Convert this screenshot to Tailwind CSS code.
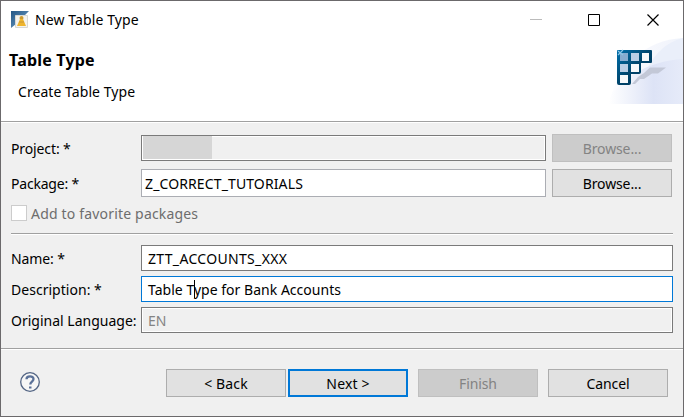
<!DOCTYPE html>
<html lang="en">
<head>
<meta charset="utf-8">
<title>New Table Type</title>
<script src="https://cdn.jsdelivr.net/npm/@tailwindcss/browser@4"></script>
</head>
<body class="overflow-hidden">
<div class="flex h-[417px] w-[684px] flex-col border border-[#6b696b] bg-[#f0f0f0] font-['Noto_Sans',sans-serif] text-[14px] leading-5 tracking-[-0.12px] whitespace-nowrap text-black">
  <header class="relative h-[120px] shrink-0 bg-white">
    <svg class="absolute top-[34px] right-0" width="74" height="69" viewBox="0 0 74 69">
      <defs>
        <linearGradient id="g1" x1="0" x2="1"><stop offset="0" stop-color="#fff"/><stop offset=".6" stop-color="#dde3f6"/><stop offset="1" stop-color="#e6ebf9"/></linearGradient>
        <linearGradient id="g2" x1="0" x2="1"><stop offset="0" stop-color="#fdfdff"/><stop offset="1" stop-color="#f0f3fb"/></linearGradient>
        <linearGradient id="g3" x1="0" y1="0" x2="1" y2="1"><stop offset="0" stop-color="#0070ac"/><stop offset=".5" stop-color="#00456c"/><stop offset="1" stop-color="#003352"/></linearGradient>
      </defs>
      <path d="M0 69C8 31 36 5 74 3v66z" fill="url(#g2)"/>
      <path d="M38 34C46 18 58 7 74 3v28L34 44z" fill="#eaeffa"/>
      <path d="M0 69C5 45 39 26 74 24v45z" fill="url(#g1)"/>
      <path d="M41 32.500h16l-8 6h-6l-8 5.500h-4l-5 5h-3l6-7 6-4z" fill="#c3c8d7"/>
      <g transform="translate(1 0)">
        <path d="M8 15h33q1 0 1 1v11q0 1-1 1H31v9q0 2-2 2h-8v9q0 2-2 2H9q-2 0-2-2V16q0-1 1-1z" fill="url(#g3)"/>
        <path d="M10 18h8v8h-8z" fill="#86acd0"/>
        <path d="M21 18h8v8h-8zM10 29h8v8h-8z" fill="#b9cee5"/>
        <path d="M32 18h7v8h-7zM21 29h8v8h-8zM10 40h8v8h-8z" fill="#f7f9fb"/>
        <path d="M8 16l5 4m0-5l-5 5" stroke="#8bc6e7" stroke-width="1.2"/>
      </g>
    </svg>
    <div class="relative flex h-[37px] items-center pl-[10px]">
      <svg width="18" height="18" viewBox="0 0 18 18">
        <defs><linearGradient id="t" x1="0" x2="1" y2="1"><stop stop-color="#235684"/><stop offset="1" stop-color="#75a5cd"/></linearGradient></defs>
        <path d="M0 0h18l-5 5H5v8l-5 4z" fill="url(#t)"/>
        <path d="M4.500 4.500h12v12h-12z" fill="#f4f3ee" stroke="#d8d8d2"/>
        <circle cx="10.500" cy="7" r="2" fill="#cc9a2e"/><path d="M9 8h3l3 7H6z" fill="#efb52d"/><path d="M8 11h5" stroke="#c79639"/>
      </svg>
      <span class="ml-[6px] tracking-[0.1px]">New Table Type</span>
      <svg class="ml-auto mr-[23px]" width="130" height="14" viewBox="0 0 130 14" fill="none">
        <path d="M0 6.500h12" stroke="#bbb"/><path d="M58.500 1.500h11v11h-11z" stroke="#000"/><path d="M117.500 1.500l11 11m0-11l-11 11" stroke="#000" stroke-width="1.200"/>
      </svg>
    </div>
    <h1 class="relative mt-[12px] pl-2 text-[16px] font-bold tracking-[0.2px]">Table Type</h1>
    <p class="relative mt-[12px] pl-[17px] tracking-[0.06px]">Create Table Type</p>
  </header>
  <div class="h-[2px] shrink-0 border-t border-[#a0a0a0] bg-white"></div>
  <main class="h-[225px] shrink-0 pr-[10px] pl-[10px] pt-[11px]">
    <div class="flex h-7 items-center">
      <label class="w-[130px] pt-px">Project: *</label>
      <div class="h-[26px] w-[405px] border border-[#7a7a7a] pl-px shadow-[inset_-1px_-1px_0_#fff,inset_1px_1px_0_#fff]"><div class="h-[23px] w-[69px] bg-[#d6d6d6]"></div></div>
      <button class="ml-[6px] h-7 w-[120px] border border-[#bfbfbf] bg-[#ccc] pt-px text-[#838383]">Browse...</button>
    </div>
    <div class="mt-[7px] flex h-7 items-center">
      <label class="w-[130px] pt-px tracking-[-0.2px]">Package: *</label>
      <div class="flex h-7 w-[405px] items-center border border-[#abadb3] bg-white pt-px pl-[3px]"><span class="tracking-[0.12px]">Z_CORRECT_TUTORIALS</span></div>
      <button class="ml-[6px] h-7 w-[120px] border border-[#adadad] bg-[#e1e1e1] pt-px">Browse...</button>
    </div>
    <div class="mt-[8px] flex h-4 items-center text-[#6d6d6d]">
      <span class="mr-1 size-4 border border-[#ccc] bg-white"></span><span class="pt-px tracking-[0.18px]">Add to favorite packages</span>
    </div>
    <div class="mt-[12px] h-[2px] border-t border-[#a0a0a0] bg-white"></div>
    <div class="mt-[10px] flex h-[26px] items-center">
      <label class="w-[130px] pt-px">Name: *</label>
      <div class="flex h-[26px] w-[532px] items-center border border-[#7a7a7a] bg-white pt-px pl-[6px]"><span class="tracking-[0.33px]">ZTT_ACCOUNTS_XXX</span></div>
    </div>
    <div class="mt-[5px] flex h-[26px] items-center">
      <label class="w-[130px] pt-px tracking-[0.03px]">Description: *</label>
      <div class="relative flex h-[26px] w-[532px] items-center border border-[#0078d7] bg-white pt-px pl-[6px]"><span class="tracking-[0.02px]">Table Type for Bank Accounts</span><i class="absolute top-[3px] left-[52px] h-[18px] w-px bg-black"></i></div>
    </div>
    <div class="mt-[5px] flex h-[26px] items-center">
      <label class="w-[130px] pt-px tracking-[0px]">Original Language:</label>
      <div class="flex h-[26px] w-[532px] items-center border border-[#7a7a7a] pt-px pl-[6px] text-[#838383] shadow-[inset_-1px_-1px_0_#fff,inset_1px_1px_0_#fff]">EN</div>
    </div>
  </main>
  <div class="h-[2px] shrink-0 border-t border-[#a0a0a0] bg-white"></div>
  <footer class="flex flex-1 pt-[19px] pl-[19px]">
    <svg class="mt-[3px] shrink-0" width="20" height="20" viewBox="0 0 20 20" fill="none">
      <circle cx="10" cy="10" r="9.300" fill="#f6f6f6" stroke="#536584" stroke-width="1.300"/>
      <path d="M6.500 7.200C6.500 3.400 13.500 3.300 13.500 7c0 2.600-3.200 2.500-3.200 5.500" stroke="#5b7198" stroke-width="2.300"/><path d="M9 14.500h2.500v2H9z" fill="#5b7198"/>
    </svg>
    <button class="ml-[126px] h-7 w-[120px] border border-[#adadad] bg-[#e1e1e1] pt-px tracking-[0.15px]">&lt; Back</button>
    <button class="ml-[2px] h-7 w-[120px] border-2 border-[#0078d7] bg-[#e1e1e1] pt-px tracking-[0.15px]">Next &gt;</button>
    <button class="ml-[10px] h-7 w-[120px] border border-[#bfbfbf] bg-[#ccc] pt-px text-[#838383]">Finish</button>
    <button class="ml-[10px] h-7 w-[120px] border border-[#adadad] bg-[#e1e1e1] pt-px">Cancel</button>
  </footer>
</div>
</body>
</html>
